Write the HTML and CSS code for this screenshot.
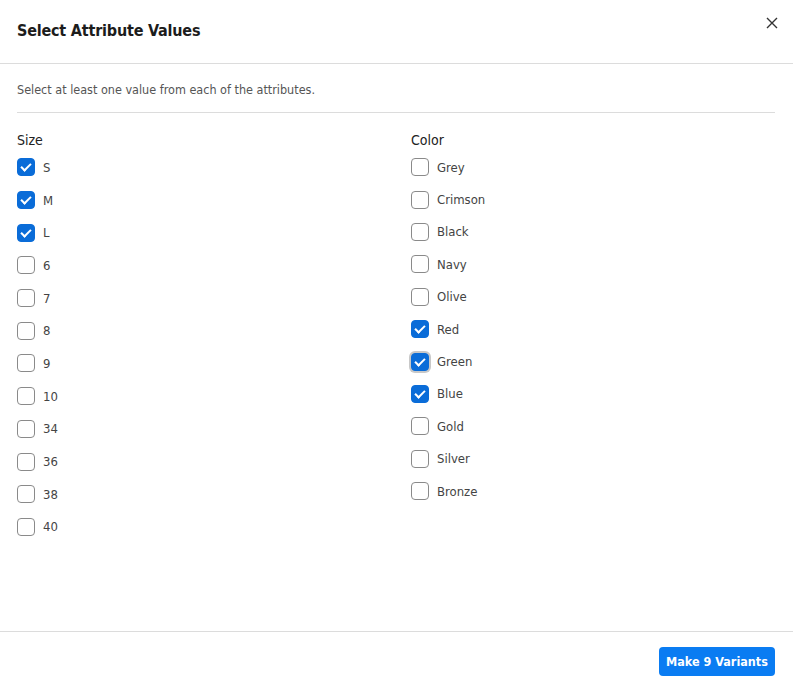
FILE: index.html
```html
<!DOCTYPE html>
<html>
<head>
<meta charset="utf-8">
<link rel="stylesheet" href="styles.css">
</head>
<body>
<div class="modal">
  <div class="header">
    <h1 class="title">Select Attribute Values</h1>
    <button class="close" aria-label="Close">
      <svg width="14" height="14" viewBox="0 0 14 14"><path d="M2 2 L12 12 M12 2 L2 12" stroke="#333" stroke-width="1.4" fill="none"/></svg>
    </button>
  </div>
  <div class="body">
    <p class="hint">Select at least one value from each of the attributes.</p>
    <div class="columns">
      <div class="col">
        <div class="col-title">Size</div>
        <label class="opt"><span class="box on"></span>S</label>
        <label class="opt"><span class="box on"></span>M</label>
        <label class="opt"><span class="box on"></span>L</label>
        <label class="opt"><span class="box"></span>6</label>
        <label class="opt"><span class="box"></span>7</label>
        <label class="opt"><span class="box"></span>8</label>
        <label class="opt"><span class="box"></span>9</label>
        <label class="opt"><span class="box"></span>10</label>
        <label class="opt"><span class="box"></span>34</label>
        <label class="opt"><span class="box"></span>36</label>
        <label class="opt"><span class="box"></span>38</label>
        <label class="opt"><span class="box"></span>40</label>
      </div>
      <div class="col color-col">
        <div class="col-title">Color</div>
        <label class="opt"><span class="box"></span>Grey</label>
        <label class="opt"><span class="box"></span>Crimson</label>
        <label class="opt"><span class="box"></span>Black</label>
        <label class="opt"><span class="box"></span>Navy</label>
        <label class="opt"><span class="box"></span>Olive</label>
        <label class="opt"><span class="box on"></span>Red</label>
        <label class="opt"><span class="box on focus"></span>Green</label>
        <label class="opt"><span class="box on"></span>Blue</label>
        <label class="opt"><span class="box"></span>Gold</label>
        <label class="opt"><span class="box"></span>Silver</label>
        <label class="opt"><span class="box"></span>Bronze</label>
      </div>
    </div>
  </div>
  <div class="footer">
    <button class="primary">Make 9 Variants</button>
  </div>
</div>
</body>
</html>
```
FILE: styles.css
```css
html, body {
  margin: 0;
  padding: 0;
  background: #fff;
}
body {
  font-family: "DejaVu Sans Condensed", Roboto, sans-serif;
  color: #222;
}
.modal {
  width: 793px;
  height: 688px;
  display: flex;
  flex-direction: column;
  box-sizing: border-box;
}
.header {
  height: 64px;
  box-sizing: border-box;
  border-bottom: 1px solid #dcdcdc;
  display: flex;
  align-items: flex-start;
  justify-content: space-between;
  padding: 0 14px 0 17px;
}
.title {
  margin: 21px 0 0;
  font-size: 16px;
  letter-spacing: -0.2px;
  font-weight: bold;
  color: #1c1c1c;
  line-height: 20px;
}
.close {
  margin-top: 16px;
  background: none;
  border: 0;
  padding: 0;
  width: 14px;
  height: 14px;
  cursor: pointer;
  display: flex;
}
.body {
  flex: 1;
  padding: 0 18px 0 17px;
}
.hint {
  margin: 0;
  padding: 18px 0 14px;
  font-size: 12.5px;
  line-height: 16px;
  color: #555;
  border-bottom: 1px solid #dcdcdc;
}
.columns {
  display: grid;
  grid-template-columns: 394px 1fr;
  padding-top: 18px;
}
.col {
  display: flex;
  flex-direction: column;
}
.col-title {
  font-size: 14px;
  line-height: 18px;
  color: #222;
  margin-bottom: 2px;
}
.opt {
  display: flex;
  align-items: center;
  gap: 8px;
  height: 32.7px;
  font-size: 13px;
  color: #444;
}
.color-col .opt {
  height: 32.4px;
}
.box {
  width: 16px;
  height: 16px;
  border: 1px solid #8a8a8a;
  border-radius: 4px;
  box-sizing: content-box;
  background: #fff;
  display: inline-block;
  position: relative;
}
.box.on {
  background: #0a6cd8;
  border-color: #0a6cd8;
}
.box.on::after {
  content: "";
  position: absolute;
  left: 5px;
  top: 2px;
  width: 4px;
  height: 8px;
  border: solid #fff;
  border-width: 0 2px 2px 0;
  transform: rotate(45deg);
}
.box.focus {
  box-shadow: 0 0 0 2px #c8c8c8;
}
.footer {
  height: 57px;
  box-sizing: border-box;
  border-top: 1px solid #dcdcdc;
  display: flex;
  justify-content: flex-end;
  align-items: flex-start;
  padding: 15px 18px 0;
}
.primary {
  background: #0a7cf2;
  color: #fff;
  border: 0;
  border-radius: 4px;
  height: 29px;
  width: 116px;
  padding: 0;
  font-family: inherit;
  font-size: 12.5px;
  font-weight: bold;
  cursor: pointer;
}
```
